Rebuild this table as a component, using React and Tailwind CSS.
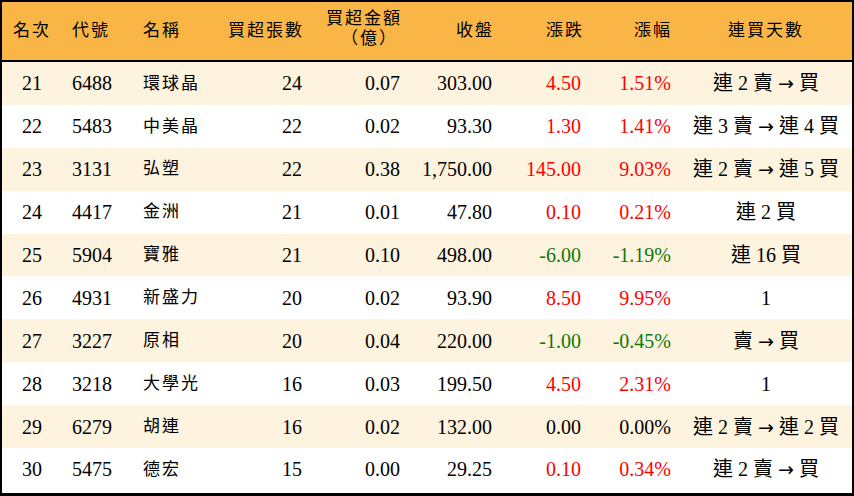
import React from "react";

const rows = [
  ["21", "6488", "環球晶", "24", "0.07", "303.00", "4.50", "1.51%", "連 2 賣 → 買"],
  ["22", "5483", "中美晶", "22", "0.02", "93.30", "1.30", "1.41%", "連 3 賣 → 連 4 買"],
  ["23", "3131", "弘塑", "22", "0.38", "1,750.00", "145.00", "9.03%", "連 2 賣 → 連 5 買"],
  ["24", "4417", "金洲", "21", "0.01", "47.80", "0.10", "0.21%", "連 2 買"],
  ["25", "5904", "寶雅", "21", "0.10", "498.00", "-6.00", "-1.19%", "連 16 買"],
  ["26", "4931", "新盛力", "20", "0.02", "93.90", "8.50", "9.95%", "1"],
  ["27", "3227", "原相", "20", "0.04", "220.00", "-1.00", "-0.45%", "賣 → 買"],
  ["28", "3218", "大學光", "16", "0.03", "199.50", "4.50", "2.31%", "1"],
  ["29", "6279", "胡連", "16", "0.02", "132.00", "0.00", "0.00%", "連 2 賣 → 連 2 買"],
  ["30", "5475", "德宏", "15", "0.00", "29.25", "0.10", "0.34%", "連 2 賣 → 買"],
];

const grid = "grid grid-cols-[60px_66px_82px_102px_98px_92px_90px_88px_1fr]";
const cjk = { fontFamily: "'Liberation Serif', 'Noto Sans CJK TC', serif" };

// price change colour: up red, down green, flat black
const tone = (v) => {
  if (v.startsWith("-")) return "text-[#0b7a0b]";
  if (/^0\.00/.test(v)) return "text-black";
  return "text-[#ff0000]";
};

const Streak = ({ text }) => {
  const parts = text.split("→");
  return (
    <>
      {parts.map((p, i) => (
        <React.Fragment key={i}>
          {i > 0 && <span className="font-['DejaVu_Sans'] text-[19px]">→</span>}
          {p}
        </React.Fragment>
      ))}
    </>
  );
};

export default function App() {
  return (
    <div className="w-[854px] h-[496px] bg-white" style={cjk}>
      <div className="h-full border-2 border-black border-b-[3px] flex flex-col text-black">
        {/* header */}
        <div className={`${grid} h-[60px] bg-[#f9b646] border-b-2 border-black items-center text-[17px] tracking-[2px]`}>
          <div className="text-center">名次</div>
          <div className="pl-[10px]">代號</div>
          <div className="pl-[15px]">名稱</div>
          <div className="text-right pr-[8px]">買超張數</div>
          <div className="text-right pr-[8px] leading-[20px] -mt-[4px]">
            <div>買超金額</div>
            <div className="pr-[4px]">（億）</div>
          </div>
          <div className="text-right pr-[8px]">收盤</div>
          <div className="text-right pr-[8px]">漲跌</div>
          <div className="text-right pr-[8px]">漲幅</div>
          <div className="text-center">連買天數</div>
        </div>

        {/* rows */}
        {rows.map((r, i) => (
          <div
            key={r[0]}
            className={`${grid} h-[42.9px] items-center text-[20px] ${i % 2 === 0 ? "bg-[#fef3df]" : "bg-white"}`}
          >
            <div className="text-center">{r[0]}</div>
            <div className="pl-[10px]">{r[1]}</div>
            <div className="pl-[15px] text-[17px] tracking-[2px]">{r[2]}</div>
            <div className="text-right pr-[10px]">{r[3]}</div>
            <div className="text-right pr-[10px]">{r[4]}</div>
            <div className="text-right pr-[10px]">{r[5]}</div>
            <div className={`text-right pr-[11px] ${tone(r[6])}`}>{r[6]}</div>
            <div className={`text-right pr-[9px] ${tone(r[7])}`}>{r[7]}</div>
            <div className="text-center whitespace-nowrap">
              <Streak text={r[8]} />
            </div>
          </div>
        ))}
      </div>
    </div>
  );
}
